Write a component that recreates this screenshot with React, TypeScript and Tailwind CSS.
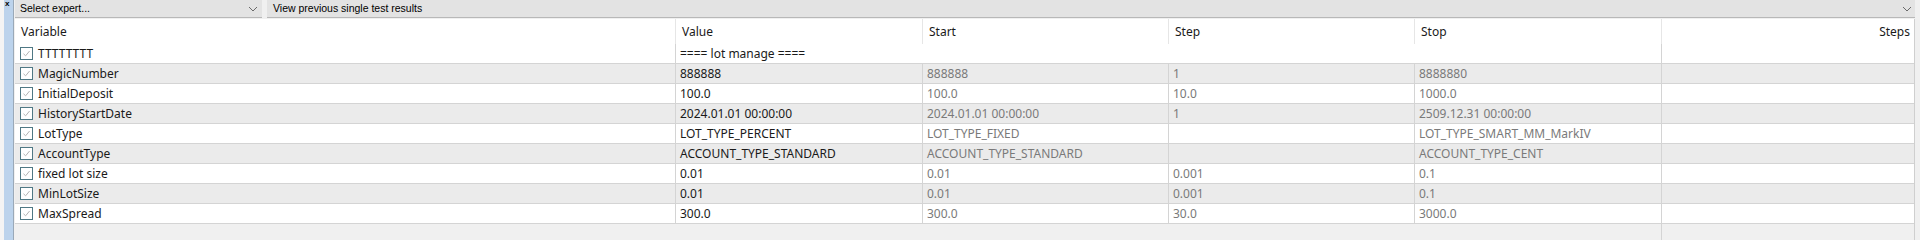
import React from "react";

const cols = "grid grid-cols-[661px_247px_246px_246px_247px_253px]";

const rows = [
  ["MagicNumber", "888888", "888888", "1", "8888880"],
  ["InitialDeposit", "100.0", "100.0", "10.0", "1000.0"],
  ["HistoryStartDate", "2024.01.01 00:00:00", "2024.01.01 00:00:00", "1", "2509.12.31 00:00:00"],
  ["LotType", "LOT_TYPE_PERCENT", "LOT_TYPE_FIXED", "", "LOT_TYPE_SMART_MM_MarkIV"],
  ["AccountType", "ACCOUNT_TYPE_STANDARD", "ACCOUNT_TYPE_STANDARD", "", "ACCOUNT_TYPE_CENT"],
  ["fixed lot size", "0.01", "0.01", "0.001", "0.1"],
  ["MinLotSize", "0.01", "0.01", "0.001", "0.1"],
  ["MaxSpread", "300.0", "300.0", "30.0", "3000.0"],
];

function Check() {
  return (
    <span className="flex items-center justify-center w-[13px] h-[13px] border border-[#4f7884] bg-white shrink-0">
      <svg width="9" height="9" viewBox="0 0 9 9" fill="none">
        <path d="M1.5 4.8 L3.6 6.8 L7.6 2" stroke="#b4b4b4" strokeWidth="1" />
      </svg>
    </span>
  );
}

function Chevron() {
  return (
    <svg width="10" height="6" viewBox="0 0 10 6" fill="none">
      <path d="M1 1 L5 5 L9 1" stroke="#6a6a6a" strokeWidth="1" />
    </svg>
  );
}

export default function App() {
  return (
    <div className="flex w-[1920px] h-[240px] overflow-hidden bg-[#f0f0f0] font-['Noto_Sans',sans-serif] text-[12px] leading-none text-[#1a1a1a]">
      {/* Left strip */}
      <div className="flex w-[15px] shrink-0">
        <div className="w-[4px] bg-[#f4f4f4]" />
        <div className="flex flex-col w-[10px] bg-[#bcd3ec] border-r border-[#9aa9b8]">
          <span className="block h-[9px] pl-[1px] text-[8px] leading-[8px] font-bold text-black font-['Liberation_Sans',sans-serif]">x</span>
        </div>
      </div>

      <div className="flex flex-col flex-1 min-w-0">
        {/* Top bar */}
        <div className="flex h-[18px] gap-[5px] pr-[5px] font-['Liberation_Sans',sans-serif] text-[10.5px] text-black bg-[#f0f0f0]">
          <div className="flex items-center justify-between w-[247px] pl-[5px] pr-[4px] bg-[#e3e3e3] border-b border-[#b8b8b8]">
            <span>Select expert...</span>
            <Chevron />
          </div>
          <div className="flex items-center justify-between flex-1 pl-[6px] pr-[3px] bg-[#e3e3e3] border-b border-[#b8b8b8]">
            <span>View previous single test results</span>
            <Chevron />
          </div>
        </div>

        {/* Table */}
        <div className="flex flex-col flex-1 w-[1900px] mt-[1px] bg-[#f0f0f0] border-r border-[#cfcfcf]">
          {/* Header */}
          <div className={`${cols} h-[25px] bg-white`}>
            <div className="flex items-center pl-[6px] border-r border-[#e6e6e6]">Variable</div>
            <div className="flex items-center pl-[6px] border-r border-[#e6e6e6]">Value</div>
            <div className="flex items-center pl-[6px] border-r border-[#e6e6e6]">Start</div>
            <div className="flex items-center pl-[6px] border-r border-[#e6e6e6]">Step</div>
            <div className="flex items-center pl-[6px] border-r border-[#e6e6e6]">Stop</div>
            <div className="flex items-center justify-end pr-[5px]">Steps</div>
          </div>

          {/* Group row */}
          <div className={`${cols} h-[20px] bg-white border-b border-[#d4d4d4]`}>
            <div className="flex items-center gap-[5px] pl-[5px] border-r border-[#d4d4d4]">
              <Check />
              <span>TTTTTTTT</span>
            </div>
            <div className="col-span-4 flex items-center pl-[4px] border-r border-[#d4d4d4]">==== lot manage ====</div>
            <div />
          </div>

          {rows.map((r, i) => (
            <div
              key={r[0]}
              className={`${cols} h-[20px] border-b border-[#d4d4d4] ${i % 2 === 0 ? "bg-[#ebebeb]" : "bg-white"}`}
            >
              <div className="flex items-center gap-[5px] pl-[5px] border-r border-[#d4d4d4]">
                <Check />
                <span>{r[0]}</span>
              </div>
              <div className="flex items-center pl-[4px] border-r border-[#d4d4d4]">{r[1]}</div>
              <div className="flex items-center pl-[4px] border-r border-[#d4d4d4] text-[#7a7a7a]">{r[2]}</div>
              <div className="flex items-center pl-[4px] border-r border-[#d4d4d4] text-[#7a7a7a]">{r[3]}</div>
              <div className="flex items-center pl-[4px] border-r border-[#d4d4d4] text-[#7a7a7a]">{r[4]}</div>
              <div />
            </div>
          ))}

          {/* Empty area */}
          <div className={`${cols} flex-1`}>
            <div />
            <div />
            <div />
            <div />
            <div className="border-r border-[#d4d4d4]" />
            <div />
          </div>
        </div>
      </div>
    </div>
  );
}
